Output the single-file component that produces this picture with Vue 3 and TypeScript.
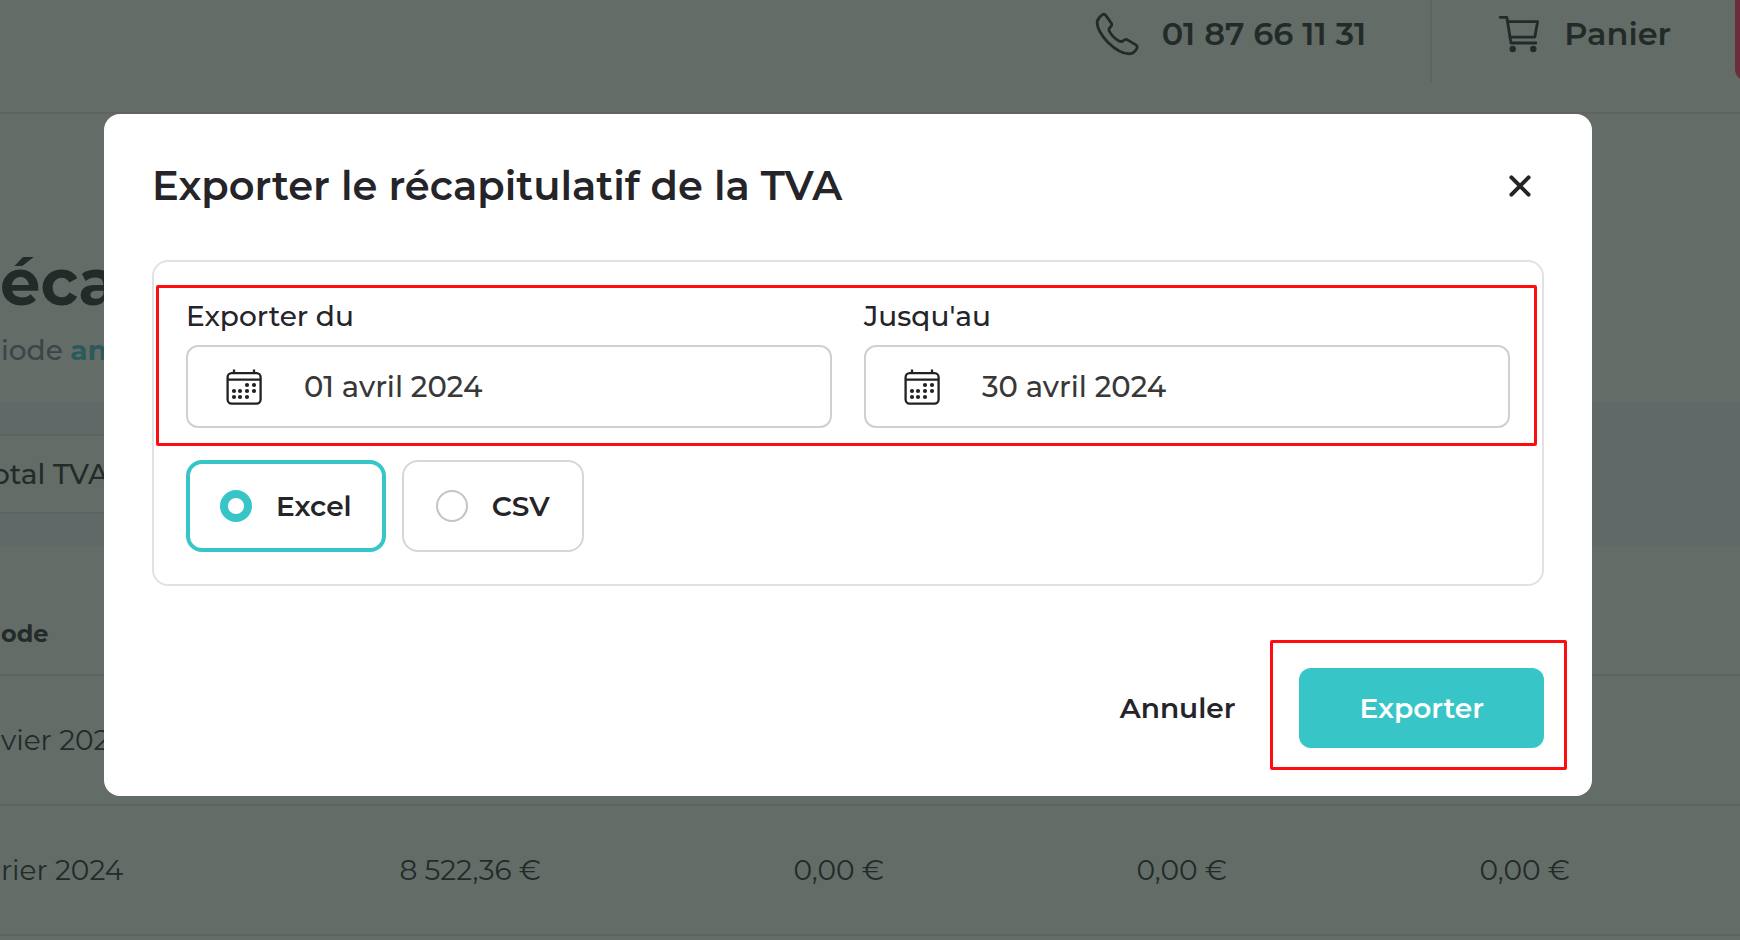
<script setup lang="ts">
import { ref } from 'vue'

interface DateField {
  id: string
  label: string
  value: string
}

interface Row {
  period: string
  amounts: string[]
}

const fields = ref<DateField[]>([
  { id: 'date-from', label: 'Exporter du', value: '01 avril 2024' },
  { id: 'date-to', label: "Jusqu'au", value: '30 avril 2024' },
])

const formats: string[] = ['Excel', 'CSV']
const selected = ref<string>('Excel')

const rows: Row[] = [
  { period: 'vier 2024', amounts: ['', '', '', ''] },
  { period: 'rier 2024', amounts: ['8 522,36 €', '0,00 €', '0,00 €', '0,00 €'] },
]

const dots: number[][] = [
  [21, 16], [28, 16],
  [8, 22], [14, 22], [21, 22], [28, 22],
  [8, 28], [14, 28], [21, 28],
]
</script>

<template>
  <div class="app">
    <div class="page">
      <header class="topbar">
        <a class="toplink" href="#tel">
          <svg class="phone" viewBox="0 0 48 44" fill="none" stroke="currentColor" stroke-width="2.8" stroke-linejoin="round">
            <path d="M3.2 9.5Q4.5 5 9 2.4Q10.5 1.8 11.8 3.4L17.2 11Q18.3 13 17 14.4Q14.6 16.5 15 18.5Q18 25 25 29Q27.5 30 29 29Q31 27 33 27.6L41.5 32.6Q44 34 42.8 36.6Q40.5 40.8 37 41.6Q27 43 14 30.5Q2.5 18 3.2 9.5Z" />
          </svg>
          <span>01 87 66 11 31</span>
        </a>
        <span class="divider"></span>
        <a class="toplink cart-link" href="#panier">
          <svg class="cart" viewBox="0 0 44 40" fill="none" stroke="currentColor" stroke-width="2.8" stroke-linecap="round" stroke-linejoin="round">
            <path d="M2.2 3.3H8.8L13 29H37.8" />
            <path d="M10 7.6H39.6L36.8 23.2H12" />
            <circle cx="14.7" cy="35" r="3.2" fill="currentColor" stroke="none" />
            <circle cx="35.3" cy="35" r="3.2" fill="currentColor" stroke="none" />
          </svg>
          <span>Panier</span>
        </a>
        <span class="cta"></span>
      </header>

      <h1 class="heading">éca</h1>
      <p class="period">iode <a href="#periode">an</a></p>

      <div class="band">
        <div class="total">otal TVA</div>
      </div>

      <table class="table">
        <thead>
          <tr>
            <th scope="col">ode</th>
            <th v-for="n in 4" :key="n"></th>
            <th class="tail"></th>
          </tr>
        </thead>
        <tbody>
          <tr v-for="row in rows" :key="row.period">
            <td>{{ row.period }}</td>
            <td v-for="(amount, i) in row.amounts" :key="i" class="amount">{{ amount }}</td>
            <td class="tail"></td>
          </tr>
        </tbody>
      </table>
    </div>

    <div class="backdrop">
      <section class="modal" role="dialog" aria-modal="true" aria-labelledby="modal-title">
        <div class="modal-head">
          <h2 id="modal-title">Exporter le récapitulatif de la TVA</h2>
          <button class="close" type="button" aria-label="Fermer">
            <svg viewBox="0 0 24 24" fill="none" stroke="currentColor" stroke-width="4" stroke-linecap="round">
              <path d="M3.4 3.4L20.6 20.6M20.6 3.4L3.4 20.6" />
            </svg>
          </button>
        </div>

        <div class="card">
          <div class="dates">
            <div v-for="field in fields" :key="field.id" class="date">
              <label :for="field.id">{{ field.label }}</label>
              <div class="box">
                <svg viewBox="0 0 36 36" fill="none" stroke="currentColor" stroke-width="2.3">
                  <rect x="1.6" y="4.2" width="33" height="30.4" rx="4" />
                  <path d="M1.6 10.6H34.6M8 .6V5M28 .6V5" />
                  <circle v-for="(d, i) in dots" :key="i" :cx="d[0]" :cy="d[1]" r="2.1" fill="currentColor" stroke="none" />
                </svg>
                <input :id="field.id" v-model="field.value" type="text" />
              </div>
            </div>
          </div>

          <div class="formats" role="radiogroup">
            <label v-for="format in formats" :key="format" class="format" :class="{ active: selected === format }">
              <input v-model="selected" type="radio" name="format" :value="format" />
              <span>{{ format }}</span>
            </label>
          </div>
        </div>

        <div class="actions">
          <button class="cancel" type="button">Annuler</button>
          <div class="submit-wrap">
            <button class="submit" type="button">Exporter</button>
          </div>
        </div>
      </section>
    </div>
  </div>
</template>

<style>
body {
  background: #646c68;
}
</style>

<style scoped>
.app,
.app * {
  box-sizing: border-box;
}

.app {
  position: relative;
  height: 100vh;
  overflow: hidden;
  font-family: Montserrat, Inter, "Liberation Sans", sans-serif;
  font-size: 28px;
  font-weight: 500;
  color: #232b29;
}

.app input,
.app button {
  font: inherit;
}

.topbar {
  display: flex;
  justify-content: flex-end;
  align-items: flex-start;
  height: 114px;
  border-bottom: 2px solid #5f6461;
}

.toplink {
  display: flex;
  align-items: center;
  height: 68px;
  color: inherit;
  font-size: 32px;
  font-weight: 600;
  text-decoration: none;
}

.toplink span {
  padding-bottom: 2px;
}

.phone {
  width: 48px;
  height: 44px;
  margin-right: 20px;
}

.divider {
  width: 2px;
  height: 82px;
  margin: 0 66px 0 64px;
  background: #5f6461;
}

.cart {
  width: 44px;
  height: 40px;
  margin-right: 22px;
}

.cart-link {
  margin-right: 64px;
}

.cta {
  width: 40px;
  height: 81px;
  margin-right: -35px;
  border-radius: 0 0 12px 12px;
  background: #692e3a;
}

.heading {
  margin: 126px 0 0;
  font-size: 64px;
  line-height: 84px;
  font-weight: 700;
}

.period {
  margin: 4px 0 0;
  padding-left: 1px;
  line-height: 44px;
  color: #3b4548;
}

.period a {
  color: #2a5a5a;
  font-weight: 700;
  text-decoration: none;
}

.band {
  margin-top: 30px;
  padding: 32px 0;
  background: #606968;
}

.total {
  width: 400px;
  height: 80px;
  margin-left: -8px;
  border: solid #5c6361;
  border-width: 2px 0;
  background: #646c68;
  line-height: 76px;
}

.table {
  width: 100%;
  border-collapse: separate;
  border-spacing: 0;
  table-layout: fixed;
  font-weight: 400;
}

.table th,
.table td {
  height: 130px;
  padding: 0;
  border-bottom: 2px solid #5f6461;
  text-align: left;
  white-space: nowrap;
}

.table th {
  padding: 48px 0 0 1px;
  font-size: 24px;
  line-height: 36px;
  font-weight: 700;
}

.table td:first-child {
  padding-left: 1px;
}

.table .amount {
  text-align: right;
}

.table th:first-child {
  width: 198px;
}

.table .tail {
  width: 170px;
}

.backdrop {
  position: absolute;
  inset: 0;
  padding: 114px 148px 0 104px;
}

.modal {
  padding: 48px;
  border-radius: 16px;
  background: #fff;
  color: #242429;
}

.modal-head {
  display: flex;
  justify-content: space-between;
  align-items: center;
  margin-bottom: 50px;
}

h2 {
  margin: 0;
  font-size: 40px;
  line-height: 48px;
  font-weight: 600;
}

.close {
  display: grid;
  place-items: center;
  width: 48px;
  height: 48px;
  padding: 0;
  border: 0;
  background: none;
  color: inherit;
}

.close svg {
  width: 24px;
  height: 24px;
}

.card {
  padding: 32px;
  border: 2px solid #e2e2e2;
  border-radius: 16px;
}

.dates {
  position: relative;
  display: grid;
  grid-template-columns: 1fr 1fr;
  gap: 32px;
}

.dates::after {
  content: "";
  position: absolute;
  inset: -9px -27px -18px -30px;
  border: 3px solid #fe0d10;
  border-radius: 2px;
  pointer-events: none;
}

.date label {
  display: block;
  margin-bottom: 6px;
  line-height: 45px;
}

.box {
  display: flex;
  align-items: center;
  height: 83px;
  padding: 0 38px;
  border: 2px solid #d0d0d0;
  border-radius: 12px;
  color: #222;
}

.box svg {
  flex: none;
  width: 36px;
  height: 36px;
  margin-right: 42px;
}

.box input {
  flex: 1;
  min-width: 0;
  padding: 0;
  border: 0;
  outline: 0;
  background: none;
  color: #383838;
  font-size: 29px;
}

.formats {
  display: flex;
  gap: 16px;
  margin-top: 32px;
}

.format {
  display: flex;
  align-items: center;
  gap: 24px;
  height: 92px;
  padding: 0 32px;
  border: 2px solid #d5d5dc;
  border-radius: 16px;
  font-weight: 600;
}

.format.active {
  padding: 0 30px;
  border: 4px solid #38c5c8;
}

.format input {
  appearance: none;
  width: 32px;
  height: 32px;
  margin: 0;
  border: 2px solid #c2c2ca;
  border-radius: 50%;
  background: #fff;
}

.format input:checked {
  border: 8px solid #38c5c8;
}

.actions {
  display: flex;
  justify-content: flex-end;
  align-items: center;
  gap: 64px;
  margin-top: 82px;
}

.actions button {
  height: 80px;
  padding: 0;
  border: 0;
  background: none;
  color: inherit;
  font-weight: 600;
}

.submit-wrap {
  position: relative;
}

.submit-wrap::after {
  content: "";
  position: absolute;
  inset: -28px -23px -22px -29px;
  border: 3px solid #fe0d10;
  border-radius: 2px;
  pointer-events: none;
}

.actions .submit {
  display: block;
  padding: 0 60px;
  border-radius: 12px;
  background: #38c5c8;
  color: #fff;
}
</style>
